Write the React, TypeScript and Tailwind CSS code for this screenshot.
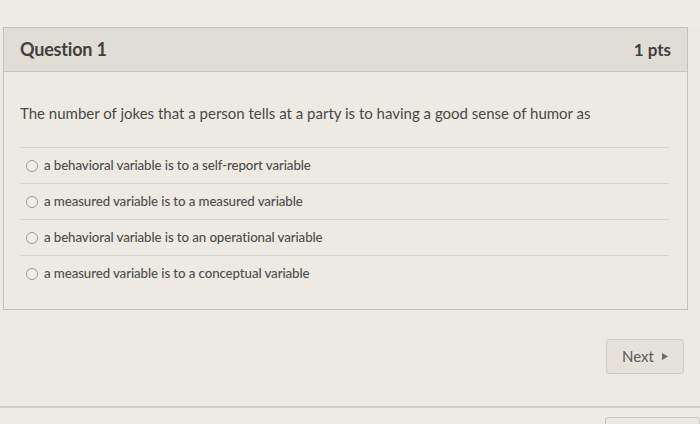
import React from "react";

const options = [
  "a behavioral variable is to a self-report variable",
  "a measured variable is to a measured variable",
  "a behavioral variable is to an operational variable",
  "a measured variable is to a conceptual variable",
];

export default function App() {
  return (
    <div
      className="w-[700px] h-[424px] overflow-hidden bg-[#ece9e1] flex flex-col"
      style={{ fontFamily: "Lato, 'Noto Sans', sans-serif" }}
    >
      <div className="h-[27px] bg-[#efece5] shrink-0" />
      <div className="ml-[3px] w-[685px] h-[283px] border border-[#c4c1ba] bg-[#edeae2] flex flex-col shrink-0">
        <div className="h-[44px] bg-[#e0ddd5] border-b border-[#c9c6bf] flex items-center justify-between pl-[16px] pr-[16px]">
          <span className="text-[18px] font-bold text-[#404040] tracking-[-0.2px]">Question 1</span>
          <span className="text-[17px] font-bold text-[#404040]">1 pts</span>
        </div>
        <div className="pl-[16px] pr-[18px] pt-[32px]">
          <p className="text-[15px] leading-[18px] text-[#484848]">
            The number of jokes that a person tells at a party is to having a good sense of humor as
          </p>
          <div className="mt-[25px] flex flex-col">
            {options.map((o) => (
              <div
                key={o}
                className="h-[36px] border-t border-[#d8d5ce] flex items-center pl-[6px] gap-[6px]"
              >
                <span className="w-[12px] h-[12px] rounded-full border border-[#999] bg-[#f1efe9]" />
                <span className="text-[13.3px] font-medium text-[#4e4e4e] tracking-[-0.1px]">{o}</span>
              </div>
            ))}
          </div>
        </div>
      </div>
      <div className="flex justify-end pr-[16px] pt-[29px] shrink-0">
        <div className="w-[78px] h-[35px] bg-[#e5e2da] border border-[#cfccc5] rounded-[3px] flex items-center justify-center gap-[8px]">
          <span className="text-[15px] text-[#5a5a5a]">Next</span>
          <svg width="6" height="7" viewBox="0 0 6 7">
            <path d="M0 0 L6 3.5 L0 7 Z" fill="#6a6a6a" />
          </svg>
        </div>
      </div>
      <div className="mt-[32px] border-t-2 border-[#d3d0c9] flex-1 bg-[#eeebe4] flex justify-end pt-[9px]">
        <div className="w-[95px] h-[20px] border border-[#c9c6bf] rounded-t-[3px] bg-[#ebe8e0]" />
      </div>
    </div>
  );
}
